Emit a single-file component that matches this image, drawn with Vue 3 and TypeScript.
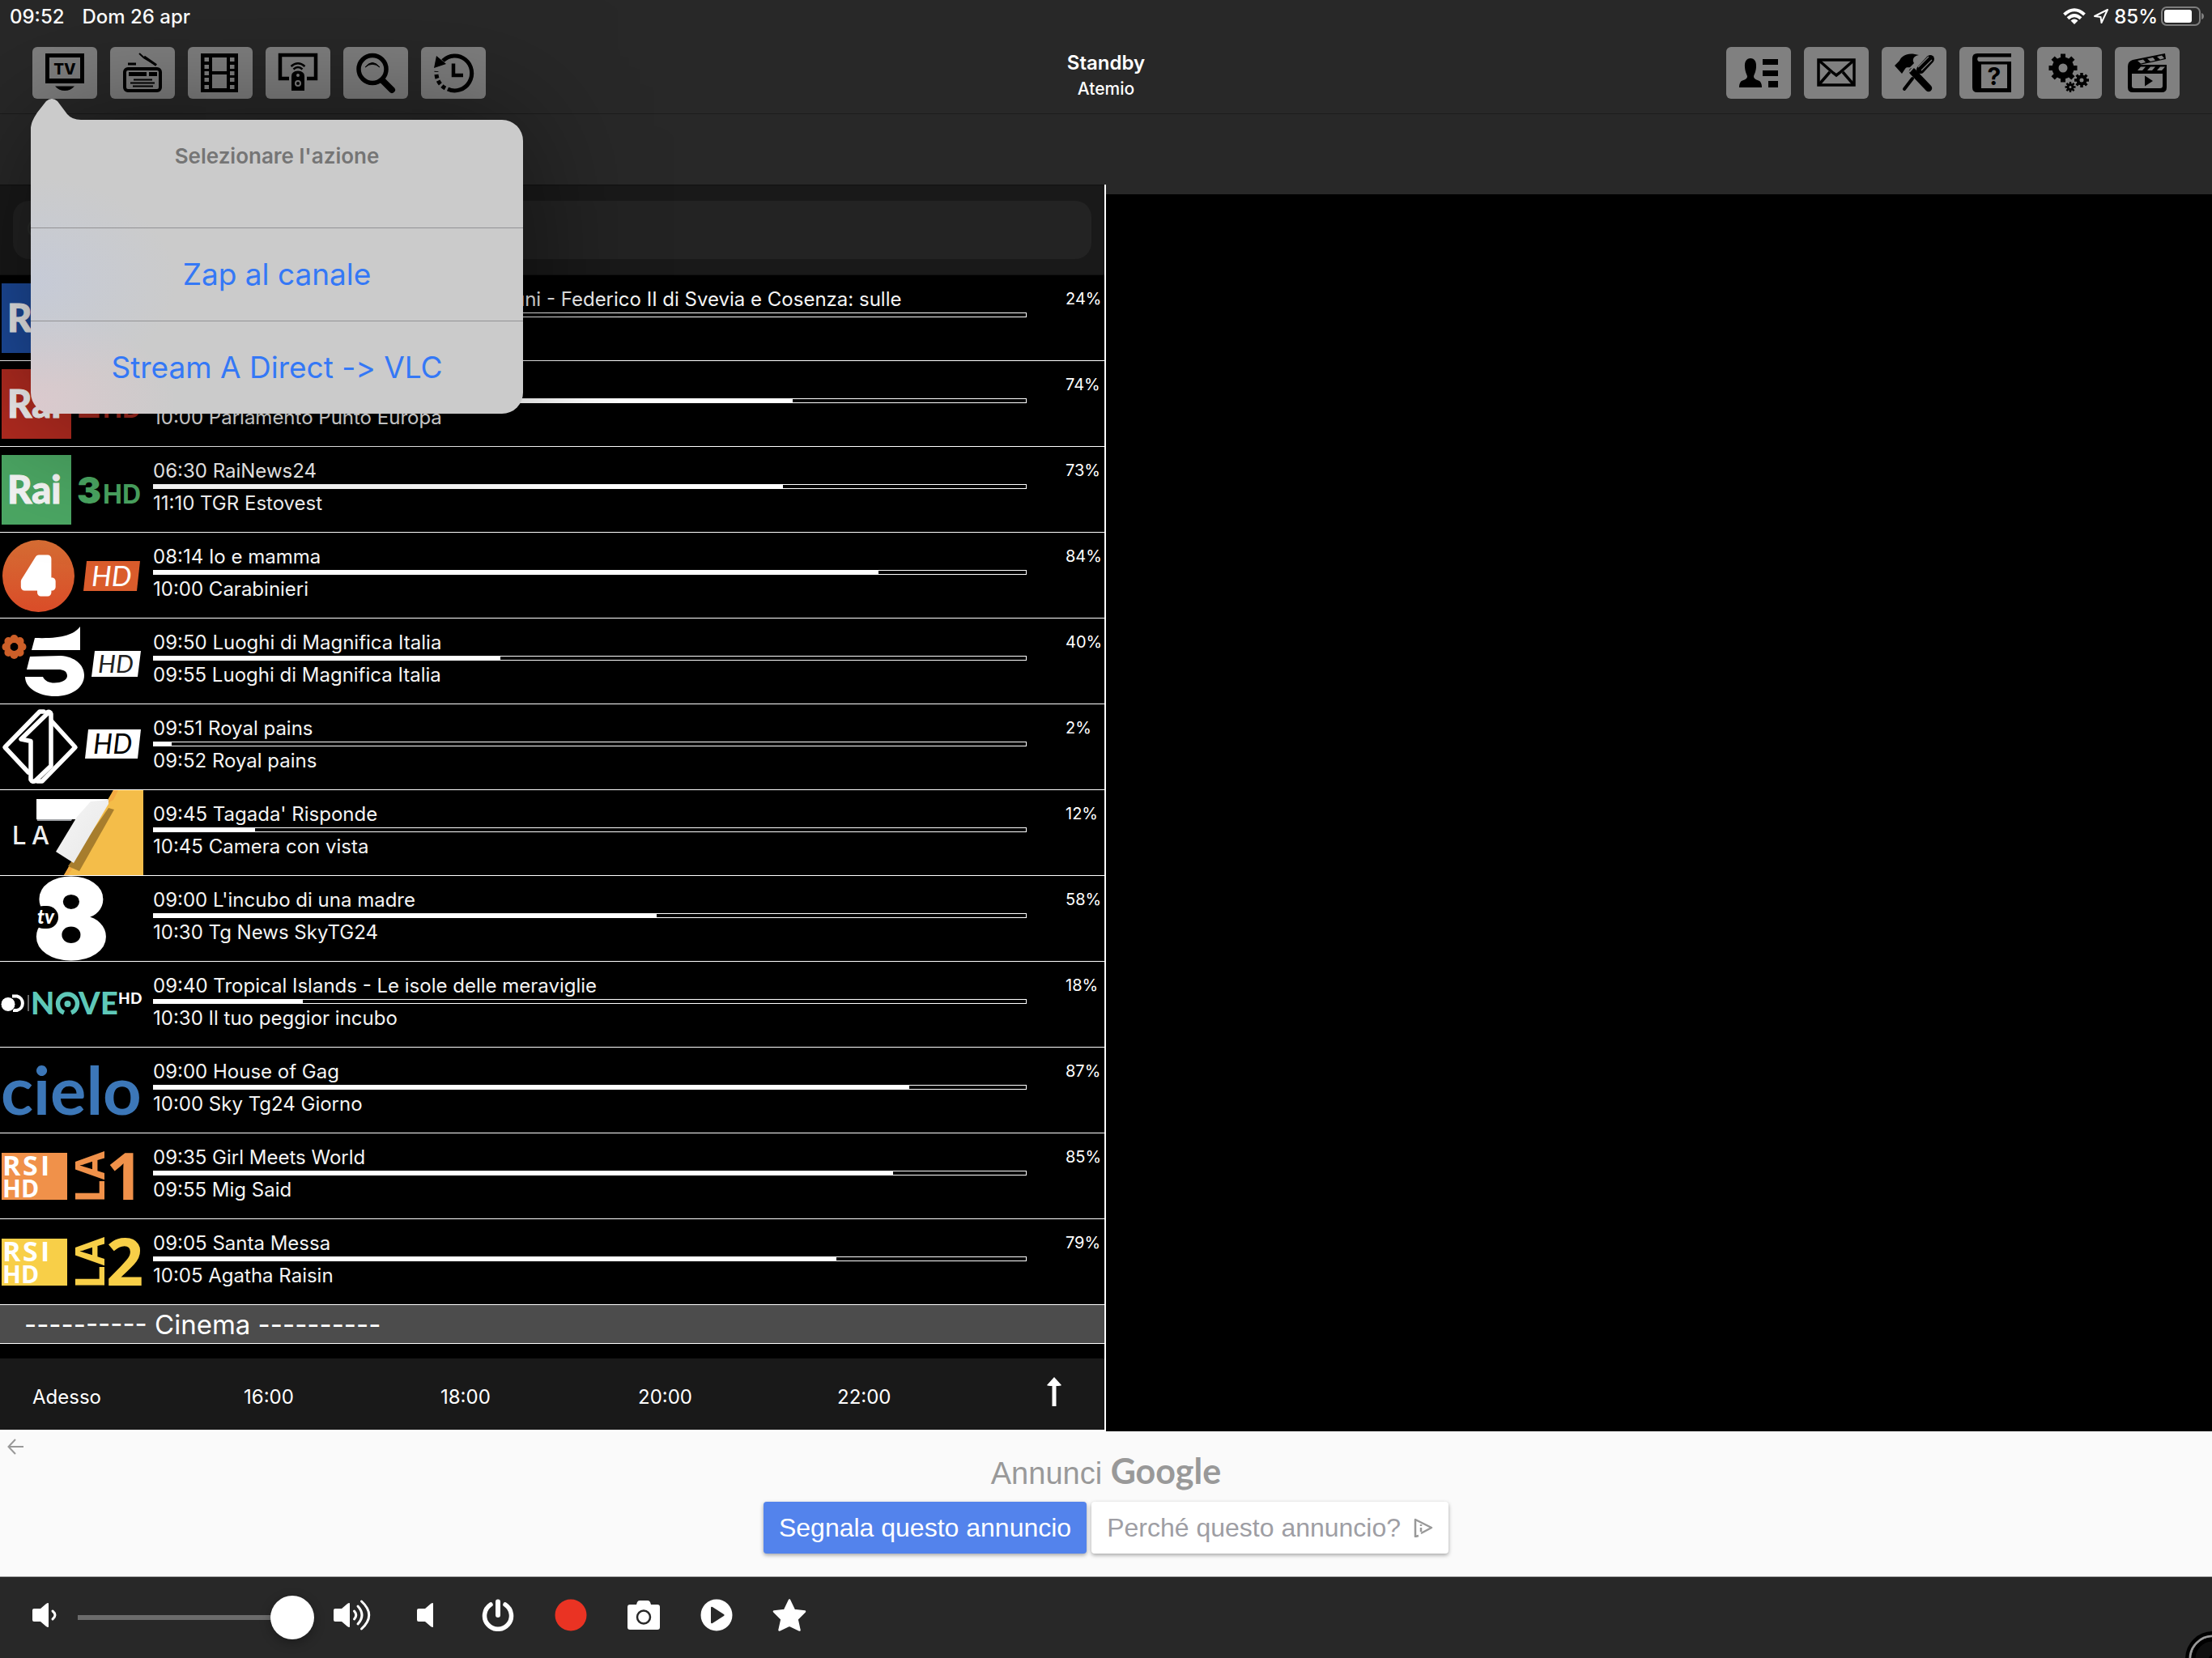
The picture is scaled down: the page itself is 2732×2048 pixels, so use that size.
<script setup lang="ts">
import { ref } from 'vue'

interface Channel {
  id: string
  now: string
  next: string
  fill: number
  percent: string
}

const channels: Channel[] = [
  { id: 'rai1', now: 'uni - Federico II di Svevia e Cosenza: sulle', next: '', fill: 24, percent: '24%' },
  { id: 'rai2', now: '', next: '10:00 Parlamento Punto Europa', fill: 73.3, percent: '74%' },
  { id: 'rai3', now: '06:30 RaiNews24', next: '11:10 TGR Estovest', fill: 72.1, percent: '73%' },
  { id: 'rete4', now: '08:14 Io e mamma', next: '10:00 Carabinieri', fill: 83.1, percent: '84%' },
  { id: 'canale5', now: '09:50 Luoghi di Magnifica Italia', next: '09:55 Luoghi di Magnifica Italia', fill: 39.7, percent: '40%' },
  { id: 'italia1', now: '09:51 Royal pains', next: '09:52 Royal pains', fill: 2, percent: '2%' },
  { id: 'la7', now: "09:45 Tagada' Risponde", next: '10:45 Camera con vista', fill: 11.6, percent: '12%' },
  { id: 'tv8', now: "09:00 L'incubo di una madre", next: '10:30 Tg News SkyTG24', fill: 57.7, percent: '58%' },
  { id: 'nove', now: '09:40 Tropical Islands - Le isole delle meraviglie', next: '10:30 Il tuo peggior incubo', fill: 17.1, percent: '18%' },
  { id: 'cielo', now: '09:00 House of Gag', next: '10:00 Sky Tg24 Giorno', fill: 86.6, percent: '87%' },
  { id: 'la1', now: '09:35 Girl Meets World', next: '09:55 Mig Said', fill: 84.8, percent: '85%' },
  { id: 'la2', now: '09:05 Santa Messa', next: '10:05 Agatha Raisin', fill: 78.3, percent: '79%' },
]

const raiColors: Record<string, { box: string; digit: string; n: string }> = {
  rai1: { box: '#1d4c9f', digit: '#1d4c9f', n: '1' },
  rai2: { box: '#b32b20', digit: '#a62a20', n: '2' },
  rai3: { box: '#4ba663', digit: '#4aa561', n: '3' },
}
const rsi: Record<string, { color: string; n: string }> = {
  la1: { color: '#f0914a', n: '1' },
  la2: { color: '#f8cf48', n: '2' },
}

const times = ['Adesso', '16:00', '18:00', '20:00', '22:00']
const petals = [0, 45, 90, 135, 180, 225, 270, 315]
const teeth8 = [0, 45, 90, 135]
const holes = [13, 22, 30, 38, 47]
const volume = ref(100)
const search = ref('')
</script>

<template>
  <div class="app">
    <header class="top">
      <div class="status">
        <span>09:52</span>
        <span class="date">Dom 26 apr</span>
        <div class="status-right">
          <svg class="wifi" viewBox="0 0 28 20" aria-hidden="true">
            <g fill="none" stroke="#fff" stroke-width="4">
              <path d="M1.500 8Q14 -3.500 26.500 8" />
              <path d="M6 12.800Q14 5.500 22 12.800" />
            </g>
            <path d="M9.500 15.500Q14 11.500 18.500 15.500L14 20Z" fill="#fff" />
          </svg>
          <svg class="loc" viewBox="0 0 20 20" aria-hidden="true">
            <path d="M18 2L2 10L9.500 11L10.500 18Z" fill="none" stroke="#fff" stroke-width="2" stroke-linejoin="round" />
          </svg>
          <span>85%</span>
          <svg class="battery" viewBox="0 0 54 24" aria-hidden="true">
            <rect x="1" y="1" width="47" height="22" rx="6" fill="none" stroke="#7e7e7e" stroke-width="2" />
            <rect x="4" y="4" width="34" height="16" rx="3" fill="#fff" />
            <path d="M50 8Q53 9 53 12T50 16Z" fill="#7e7e7e" />
          </svg>
        </div>
      </div>

      <nav class="toolbar">
        <div class="tools">
          <button type="button" class="tool" aria-label="TV">
            <svg viewBox="0 0 80 64">
              <rect x="18.500" y="10.500" width="43" height="31" fill="none" stroke="#000" stroke-width="5" />
              <rect x="16" y="40" width="48" height="5" />
              <text x="40" y="34" text-anchor="middle" class="g-tv">TV</text>
              <path d="M28 48.500H52Q47 54 40 54T28 48.500Z" />
            </svg>
          </button>
          <button type="button" class="tool" aria-label="Radio">
            <svg viewBox="0 0 80 64">
              <path d="M36 8L42 13.500M41 13L57 22.500" stroke="#000" stroke-width="2" />
              <path d="M42 12L57 22.500" stroke="#000" stroke-width="3" />
              <rect x="22" y="19.500" width="10" height="3" />
              <rect x="18" y="27" width="44" height="27" rx="4" fill="none" stroke="#000" stroke-width="4" />
              <rect x="23" y="31" width="22" height="5" /><rect x="48" y="31" width="10" height="5" />
              <path d="M29 40.500H52M25 44.500H55M30 40.500H52M28 48.500H53" stroke="#000" stroke-width="2" />
            </svg>
          </button>
          <button type="button" class="tool" aria-label="Film">
            <svg viewBox="0 0 80 64">
              <rect x="16" y="8" width="46" height="48" />
              <g class="cut">
                <rect x="30" y="13" width="18" height="17" /><rect x="30" y="34" width="18" height="17" />
                <template v-for="y in holes" :key="y">
                  <rect x="20.500" :y="y" width="5.500" height="5" /><rect x="52" :y="y" width="5.500" height="5" />
                </template>
              </g>
            </svg>
          </button>
          <button type="button" class="tool" aria-label="Telecomando">
            <svg viewBox="0 0 80 64">
              <path d="M29 39H18V10H62V39H51" fill="none" stroke="#000" stroke-width="4.500" />
              <path d="M31.500 24Q40 16.500 48.500 24M34.500 27.500Q40 22.500 45.500 27.500" fill="none" stroke="#000" stroke-width="2.500" />
              <path d="M32 54V36Q32 30 40 29.500Q48 30 48 36V54Z" />
              <circle cx="40" cy="35" r="2" class="cut" />
              <circle cx="40" cy="45" r="3" fill="none" class="cut-line" stroke-width="2" />
            </svg>
          </button>
          <button type="button" class="tool" aria-label="Cerca">
            <svg viewBox="0 0 80 64">
              <path d="M49 42L60 53" stroke="#000" stroke-width="8" stroke-linecap="round" />
              <circle cx="36" cy="27.500" r="17" fill="none" stroke="#000" stroke-width="5.500" />
              <path d="M27 25Q36 14 45 25Q36 17.500 27 25Z" stroke="#000" stroke-width="1" />
            </svg>
          </button>
          <button type="button" class="tool" aria-label="Cronologia">
            <svg viewBox="0 0 80 64">
              <path d="M27 17A21 21.500 0 1 1 33 52" fill="none" stroke="#000" stroke-width="5" />
              <path d="M30 51A21 21.500 0 0 1 19 30" fill="none" stroke="#000" stroke-width="5" stroke-dasharray="5 3" />
              <path d="M19 11L16 26L31 21Z" />
              <path d="M40 20.500V35H52" fill="none" stroke="#000" stroke-width="4.500" />
            </svg>
          </button>
        </div>

        <div class="title">
          <h1>Standby</h1>
          <p>Atemio</p>
        </div>

        <div class="tools">
          <button type="button" class="tool" aria-label="Profili">
            <svg viewBox="0 0 80 64">
              <path d="M30 14C35 14 37.500 18 37 25C36.500 31 35 33 34 36C34 39 36 40 40 41.500Q44 43 44 50H16Q16 43 20 41.500C24 40 26 39 26 36C25 33 23.500 31 23 25C22.500 18 25 14 30 14Z" />
              <rect x="45" y="15" width="19" height="7" /><rect x="45" y="29" width="19" height="7" /><rect x="52" y="42" width="12" height="8" />
            </svg>
          </button>
          <button type="button" class="tool" aria-label="Messaggi">
            <svg viewBox="0 0 80 64">
              <g fill="none" stroke="#000" stroke-width="3.500">
                <rect x="18" y="16" width="44" height="31" />
                <path d="M19 17L36 32L40 35L44 32L61 17M19 46L32 31M61 46L48 31" />
              </g>
            </svg>
          </button>
          <button type="button" class="tool" aria-label="Strumenti">
            <svg viewBox="0 0 80 64">
              <path d="M16 23L22 17C25 10 33 6 46 10C40 11 37 15 40 20L35 25C33 26 31 24 29 27L25 33Z" />
              <path d="M38 30L58 51" stroke="#000" stroke-width="8.500" stroke-linecap="round" />
              <path d="M34 31L42 22" class="cut-line" stroke-width="2" />
              <path d="M28 52L38 39" stroke="#000" stroke-width="4" stroke-linecap="round" />
              <path d="M48 28L60 15" stroke="#000" stroke-width="10" stroke-linecap="round" />
              <path d="M45 25L58 12M49 29L62 16" class="cut-line" stroke-width="1.200" />
            </svg>
          </button>
          <button type="button" class="tool" aria-label="Guida">
            <svg viewBox="0 0 80 64">
              <path d="M64 8H22Q16 8 16 14V50Q16 56 22 56H64V18H24Q21 16 23 12.500H64Z" />
              <path d="M27 21.500H59V51H27Z" class="cut" />
              <text x="43" y="47" text-anchor="middle" class="g-q">?</text>
            </svg>
          </button>
          <button type="button" class="tool" aria-label="Impostazioni">
            <svg viewBox="0 0 80 64">
              <g stroke="#000">
                <circle cx="32" cy="26" r="9.500" fill="none" stroke-width="8" />
                <path v-for="a in teeth8" :key="'a' + a" d="M32 8.500V15M32 37V43.500" stroke-width="6" :transform="`rotate(${a} 32 26)`" />
                <circle cx="55" cy="41" r="4.500" fill="none" stroke-width="4" />
                <path v-for="a in teeth8" :key="'b' + a" d="M55 32V36M55 46V50" stroke-width="3.500" :transform="`rotate(${a} 55 41)`" />
                <circle cx="41" cy="49.500" r="3" fill="none" stroke-width="3" />
                <path v-for="a in teeth8" :key="'c' + a" d="M41 43V46M41 53V56" stroke-width="2.500" :transform="`rotate(${a} 41 49.500)`" />
              </g>
            </svg>
          </button>
          <button type="button" class="tool" aria-label="Registrazioni">
            <svg viewBox="0 0 80 64">
              <path d="M16 24Q16 18 22 16L62 8L63 15L31 22H64V50Q64 56 58 56H22Q16 56 16 50Z" />
              <path d="M21 33H59V48Q59 51 56 51H24Q21 51 21 48Z" class="cut" />
              <path d="M28 17L35 15.500L38 19L32 20.500ZM40 14.500L47 13L50 16.500L44 18ZM52 12L58 10.500L61 14L56 15.500ZM32 24.500H38L34 29H28ZM44 24.500H50L46 29H40ZM56 24.500H62L58 29H52Z" class="cut" />
              <path d="M37 35.500L47 42L37 48.500Z" />
            </svg>
          </button>
        </div>
      </nav>
      <div class="subbar"></div>
    </header>

    <main class="main">
      <section class="guide">
        <div class="search">
          <label class="field">
            <svg viewBox="0 0 32 32" aria-hidden="true"><circle cx="14" cy="14" r="11" fill="none" stroke="#2c2e2c" stroke-width="2" /><path d="M22 22L30 30" stroke="#2c2e2c" stroke-width="2" /></svg>
            <input v-model="search" type="text" aria-label="Cerca canale" />
          </label>
        </div>

        <ul class="list">
          <li v-for="c in channels" :key="c.id" class="row">
            <svg class="logo" viewBox="0 0 178 105" aria-hidden="true">
              <template v-if="raiColors[c.id]">
                <rect x="2" y="10" width="86" height="86" :fill="raiColors[c.id].box" />
                <text x="9" y="70" class="lato" font-size="47" fill="#f4f4f4" stroke="#f4f4f4" stroke-width="1">Rai</text>
                <text x="95" y="70" class="inter9" font-size="45" :fill="raiColors[c.id].digit">{{ raiColors[c.id].n }}</text>
                <text x="127" y="70" class="inter8" font-size="32" :fill="raiColors[c.id].digit">HD</text>
              </template>
              <template v-else-if="c.id === 'rete4'">
                <linearGradient id="r4" x1="0" y1="0" x2="0" y2="1"><stop offset="0" stop-color="#d56d34" /><stop offset="1" stop-color="#da4c28" /></linearGradient>
                <circle cx="47.500" cy="53.500" r="44.500" fill="url(#r4)" />
                <text x="47" y="74" text-anchor="middle" class="inter8" font-size="58" fill="#fff" stroke="#fff" stroke-width="9" stroke-linejoin="round">4</text>
                <path d="M107 35H173L169 72H103Z" fill="#da5c2c" />
                <text x="113" y="66" class="hd" font-size="35" fill="#fff">HD</text>
              </template>
              <template v-else-if="c.id === 'canale5'">
                <g fill="#cd5f28">
                  <circle v-for="a in petals" :key="a" cx="17.500" cy="25" r="5" :transform="`rotate(${a} 17.500 35)`" />
                  <circle cx="17.500" cy="35" r="8" fill="none" stroke="#cd5f28" stroke-width="6" />
                </g>
                <path d="M43 24C75 25 90 21 99 10V39H39Z" fill="#fff" />
                <path d="M37 47L75 46C92 47 104 57 104 70C104 86 88 96 68 96C48 96 31 86 31 72H53C55 77 61 79.500 67 79.500C75 79.500 83 76 83 71C83 65 78 63 72 63H33Z" fill="#fff" />
                <path d="M117 40H174L170 72H113Z" fill="#fff" />
                <text x="121" y="67" class="hd" font-size="31" fill="#222">HD</text>
              </template>
              <template v-else-if="c.id === 'italia1'">
                <g fill="none" stroke="#fff" stroke-width="5.500" stroke-linejoin="round" stroke-linecap="round">
                  <path d="M54 9H49L6 53L35 84" />
                  <path d="M60 10L26 43L38 45.500V93Q40 97 44 94L63 76V12Q62 8 58 10" />
                  <path d="M64 21L93 53L52 95H46" />
                </g>
                <path d="M109 31H174L170 67H105Z" fill="#fff" />
                <text x="115" y="61" class="hd" font-size="34" fill="#000">HD</text>
              </template>
              <template v-else-if="c.id === 'la7'">
                <linearGradient id="l7" x1="0" y1="0" x2="1" y2="1"><stop offset="0" stop-color="#f5f5f5" /><stop offset=".7" stop-color="#ececec" /><stop offset="1" stop-color="#b9bcc2" /></linearGradient>
                <path d="M140 0H177V105H79Z" fill="#f4bd49" />
                <path d="M140 0H146L140 12L133 16ZM90 86L79 105H84L94 90Z" fill="#f3aa42" />
                <path d="M134 22L141 24L98 100L84 94Z" fill="#a77d2d" />
                <path d="M45 34L90 34L88 38H46Z" fill="#9c9ea2" />
                <path d="M45 11H134L128 16L95 36H45Z" fill="#fff" />
                <path d="M112 14L134 12V17L91 90L69 76L95 33Z" fill="url(#l7)" />
                <text x="15 39" y="67" class="inter5" font-size="31" fill="#eee">LA</text>
              </template>
              <template v-else-if="c.id === 'tv8'">
                <text x="88" y="102" text-anchor="middle" class="inter9" font-size="136" fill="#fff" stroke="#fff" stroke-width="3">8</text>
                <rect x="40" y="37" width="32" height="28" rx="14" fill="#000" />
                <text x="46" y="59" class="tv" font-size="24" fill="#fff">tv</text>
              </template>
              <template v-else-if="c.id === 'nove'">
                <path d="M15 42.500H21A9 9 0 0 1 21 60H16" fill="none" stroke="#fff" stroke-width="4" />
                <circle cx="10" cy="52.500" r="9" fill="#fff" stroke="#000" stroke-width="1" />
                <rect x="34" y="41" width="2" height="20" fill="#666" />
                <text x="38" y="65" class="lato" font-size="38" fill="#5ec8b8">N</text>
                <path d="M79 63A12 12 0 1 1 88 63" fill="none" stroke="#5ec8b8" stroke-width="5.500" />
                <circle cx="83.500" cy="52" r="4" fill="#5ec8b8" />
                <text x="97 124" y="65" class="lato" font-size="38" fill="#5ec8b8">VE</text>
                <text x="146 161" y="52" class="lato" font-size="19" fill="#fff">HD</text>
              </template>
              <template v-else-if="c.id === 'cielo'">
                <text x="1" y="83" class="lato7" font-size="83" fill="#3c77b8">cielo</text>
              </template>
              <template v-else>
                <rect x="2" y="24" width="81" height="58" :fill="rsi[c.id].color" />
                <text x="3 28 50" y="52" class="open" font-size="34" fill="#fff">RSI</text>
                <text x="3" y="79" class="open" font-size="30" fill="#fff">HD</text>
                <text transform="translate(129 86) rotate(-90)" class="open" font-size="51" :fill="rsi[c.id].color">LA</text>
                <text x="131" y="82" class="open" font-size="81" :fill="rsi[c.id].color">{{ rsi[c.id].n }}</text>
              </template>
            </svg>
            <div class="epg">
              <span class="line" :class="{ continued: c.id === 'rai1' }">{{ c.now }}</span>
              <div class="bar"><div class="fill" :style="{ width: c.fill + '%' }"></div></div>
              <span class="line">{{ c.next }}</span>
            </div>
            <span class="pct">{{ c.percent }}</span>
          </li>
        </ul>
        <h2 class="group">---------- Cinema ----------</h2>
        <div class="rest"></div>

        <nav class="times">
          <button v-for="t in times" :key="t" type="button">{{ t }}</button>
          <button type="button" aria-label="Su">
            <svg viewBox="0 0 20 36"><path d="M10 0L19 10Q18 11 12.500 11V36H7.500V11Q2 11 1 10Z" fill="#fff" /></svg>
          </button>
        </nav>
      </section>
      <section class="player"></section>
    </main>

    <aside class="ad">
      <button type="button" class="back" aria-label="Indietro">
        <svg viewBox="0 0 20 20"><path d="M20 10H2M10 1L1.500 10L10 19" fill="none" stroke="#999" stroke-width="2" /></svg>
      </button>
      <p class="brand">Annunci <span>Google</span></p>
      <div class="choices">
        <button type="button" class="report">Segnala questo annuncio</button>
        <button type="button" class="why">
          Perché questo annuncio?
          <svg viewBox="0 0 24 24" aria-hidden="true">
            <path d="M6 22L2 23V2L22 12L9 19" fill="none" stroke="#999" stroke-width="2.500" stroke-linejoin="round" />
            <path d="M9 8V10M9 12V17" stroke="#999" stroke-width="2.500" />
          </svg>
        </button>
      </div>
    </aside>

    <footer class="controls">
      <svg class="low" viewBox="0 0 30 30" aria-hidden="true">
        <path d="M0 9Q0 7 2 7H10L17 1Q20 -1 20 1V29Q20 31 17 29L10 23H2Q0 23 0 21Z" fill="#fff" />
        <path d="M25 10Q31 15 25 20" fill="none" stroke="#fff" stroke-width="3" stroke-linecap="round" />
      </svg>
      <input v-model="volume" class="slider" type="range" min="0" max="100" aria-label="Volume" />
      <button type="button" aria-label="Volume alto">
        <svg viewBox="0 0 46 40">
          <path d="M0 14Q0 12 2 12H10L17 6Q20 4 20 6V34Q20 36 17 34L10 28H2Q0 28 0 26Z" fill="#fff" />
          <g fill="none" stroke="#fff" stroke-width="3" stroke-linecap="round">
            <path d="M25.500 15Q30 20 25.500 25" /><path d="M30 9Q40 20 30 31" /><path d="M34.500 3Q53 20 34.500 37" />
          </g>
        </svg>
      </button>
      <button type="button" aria-label="Muto">
        <svg viewBox="0 0 20 40"><path d="M0 14Q0 12 2 12H10L17 6Q20 4 20 6V34Q20 36 17 34L10 28H2Q0 28 0 26Z" fill="#fff" /></svg>
      </button>
      <button type="button" aria-label="Spegni">
        <svg viewBox="0 0 40 40">
          <path d="M11 7A16.500 16.500 0 1 0 29 7" fill="none" stroke="#fff" stroke-width="5.500" stroke-linecap="round" />
          <path d="M20 3.500V20" stroke="#fff" stroke-width="6" stroke-linecap="round" />
        </svg>
      </button>
      <button type="button" aria-label="Registra">
        <svg viewBox="0 0 40 40"><circle cx="20" cy="20" r="19.500" fill="#ea3323" /></svg>
      </button>
      <button type="button" aria-label="Foto">
        <svg viewBox="0 0 40 40">
          <path d="M3 7H11L12 4Q13 2 15 2H25Q27 2 28 4L29 7H37Q40 7 40 10V35Q40 38 37 38H3Q0 38 0 35V10Q0 7 3 7Z" fill="#fff" />
          <circle cx="20" cy="22.500" r="8" fill="none" stroke="#282828" stroke-width="2.500" />
        </svg>
      </button>
      <button type="button" aria-label="Riproduci">
        <svg viewBox="0 0 40 40"><circle cx="20" cy="20" r="19.500" fill="#fff" /><path d="M13 11Q13 9 15 10L29 19Q30.500 20 29 21L15 30Q13 31 13 29Z" fill="#282828" /></svg>
      </button>
      <button type="button" aria-label="Preferiti">
        <svg viewBox="0 0 42 40"><path d="M21 1.500L27 14L40 15.500L30.500 25L33.500 38.500L21 32.500L8.500 38.500L11.500 25L2 15.500L15 14Z" fill="#fff" stroke="#fff" stroke-width="2.500" stroke-linejoin="round" /></svg>
      </button>
    </footer>

    <div class="popover" role="dialog" aria-labelledby="sheet-title">
      <svg class="arrow" viewBox="0 0 64 40" aria-hidden="true">
        <path d="M0 40C0 28 4 24 8 17L19 3Q26 -3 33 3L45 19Q51 26 62 26V40Z" fill="#cbcbcb" />
      </svg>
      <h2 id="sheet-title">Selezionare l'azione</h2>
      <button type="button">Zap al canale</button>
      <button type="button">Stream A Direct -&gt; VLC</button>
    </div>

    <svg class="orb" viewBox="0 0 34 34" aria-hidden="true">
      <circle cx="35" cy="35" r="34" fill="#000" />
      <circle cx="35" cy="35" r="28" fill="#111" stroke="#999" stroke-width="3" />
      <circle cx="35" cy="35" r="24" fill="#0f0f0f" stroke="#000" stroke-width="5" />
      <circle cx="35" cy="35" r="5" fill="#000" />
    </svg>
  </div>
</template>

<style>
body {
  background: #000;
}
</style>

<style scoped>
.app {
  position: relative;
  display: flex;
  flex-direction: column;
  min-height: 100vh;
  overflow: hidden;
  background: #000;
  color: #fff;
  font-family: Inter, 'Liberation Sans', sans-serif;
  font-size: 24px;
}
h1, h2, p, ul {
  margin: 0;
  padding: 0;
  font-weight: 400;
}
button {
  margin: 0;
  padding: 0;
  border: 0;
  background: none;
  color: inherit;
  font: inherit;
  cursor: pointer;
}
svg {
  display: block;
}
.top {
  background: #282828;
}
.status {
  display: flex;
  align-items: center;
  height: 40px;
  padding: 0 9px 0 12px;
  box-sizing: border-box;
  font-weight: 500;
}
.date {
  margin-left: 22px;
}
.status-right {
  display: flex;
  align-items: center;
  margin-left: auto;
}
.wifi {
  width: 28px;
  height: 20px;
  margin-right: 9px;
}
.loc {
  width: 20px;
  height: 20px;
  margin-right: 6px;
}
.battery {
  width: 54px;
  height: 24px;
  margin-left: 4px;
}
.toolbar {
  display: grid;
  grid-template-columns: 1fr auto 1fr;
  align-items: center;
  height: 100px;
  padding: 0 40px;
  border-bottom: 1px solid #1c1c1c;
}
.tools {
  display: flex;
  gap: 16px;
}
.tools:last-child {
  justify-content: flex-end;
}
.tool {
  width: 80px;
  height: 64px;
  border-radius: 6px;
  background: #808080;
}
.tool svg {
  width: 80px;
  height: 64px;
}
.cut {
  fill: #808080;
}
.cut-line {
  stroke: #808080;
}
.g-tv {
  font: 800 19px Inter, sans-serif;
}
.g-q {
  font: 700 30px Inter, sans-serif;
}
.title {
  padding-top: 8px;
  text-align: center;
}
.title h1 {
  font-size: 24px;
  line-height: 32px;
  font-weight: 600;
}
.title p {
  font-size: 21px;
  line-height: 32px;
  font-weight: 500;
}
.subbar {
  height: 87px;
}
.main {
  display: flex;
  flex: 1;
}
.guide {
  display: flex;
  flex-direction: column;
  flex: none;
  width: 50%;
  box-sizing: border-box;
  border-right: 2px solid #fff;
  border-bottom: 2px solid #fff;
}
.player {
  flex: 1;
  border-top: 12px solid #282828;
}
.search {
  height: 112px;
  box-sizing: border-box;
  padding: 19px 16px;
  border-top: 1px solid #101010;
  border-bottom: 1px solid #111;
  background: #191919;
}
.field {
  display: flex;
  align-items: center;
  gap: 12px;
  height: 72px;
  padding: 0 16px;
  border-radius: 20px;
  background: #232323;
}
.field svg {
  width: 32px;
  height: 32px;
}
.field input {
  flex: 1;
  border: 0;
  outline: 0;
  background: none;
  color: #fff;
  font: inherit;
}
.list {
  list-style: none;
}
.row {
  display: flex;
  height: 105px;
  border-bottom: 1px solid #fff;
}
.logo {
  flex: none;
  width: 178px;
  height: 105px;
  margin-right: 11px;
  overflow: visible;
}
.epg {
  flex: 1;
  min-width: 0;
  padding-top: 14px;
}
.line {
  display: block;
  height: 32px;
  line-height: 32px;
  white-space: pre;
  color: #f4f4f4;
}
.continued {
  margin-left: 445px;
}
.bar {
  height: 4px;
  margin-bottom: 2px;
  border: 1px solid #fff;
}
.fill {
  height: 4px;
  background: #fff;
}
.pct {
  width: 48px;
  margin-left: 48px;
  padding-top: 14px;
  font-size: 20px;
  line-height: 30px;
  white-space: nowrap;
}
.lato { font-family: Lato, sans-serif; font-weight: 900; }
.lato7 { font-family: Lato, sans-serif; font-weight: 700; }
.inter5 { font-family: Inter, sans-serif; font-weight: 500; }
.inter9 { font-family: Inter, sans-serif; font-weight: 900; }
.inter8 { font-family: Inter, sans-serif; font-weight: 700; }
.open { font-family: 'Open Sans', sans-serif; font-weight: 700; }
.hd { font-family: Lato, sans-serif; font-weight: 400; font-style: italic; }
.tv { font-family: Lato, sans-serif; font-weight: 900; font-style: italic; }
.group {
  height: 47px;
  padding-left: 30px;
  border-bottom: 1px solid #fff;
  background: #4c4c4c;
  font-size: 33px;
  line-height: 49px;
}
.rest {
  flex: 1;
}
.times {
  display: grid;
  grid-template-columns: 261fr 243fr 244fr 246fr 256fr 74fr;
  align-items: center;
  height: 88px;
  padding-left: 40px;
  background: #191919;
}
.times button {
  padding-top: 7px;
  text-align: left;
}
.times button:last-child {
  padding-top: 0;
}
.times svg {
  width: 20px;
  height: 36px;
  margin: -6px 0 0 2px;
}
.ad {
  position: relative;
  height: 179px;
  border-bottom: 1px solid #a8a8a8;
  background: #fafafa;
  color: #999;
  font-family: 'Liberation Sans', Arial, sans-serif;
  text-align: center;
}
.back {
  position: absolute;
  left: 9px;
  top: 9px;
}
.back svg {
  width: 20px;
  height: 20px;
}
.brand {
  height: 68px;
  padding-top: 19px;
  font-size: 38px;
  line-height: 60px;
}
.brand span {
  font-family: Lato, sans-serif;
  font-size: 43px;
  font-weight: 700;
}
.choices {
  display: flex;
  justify-content: center;
  gap: 6px;
}
.choices button {
  display: flex;
  align-items: center;
  height: 64px;
  padding: 0 19px;
  border-radius: 4px;
  box-shadow: 0 2px 5px rgba(0, 0, 0, 0.35);
  font-size: 32px;
}
.choices .report {
  background: #5383ec;
  color: #fff;
}
.choices .why {
  background: #fff;
  color: #9e9ea4;
}
.why svg {
  width: 24px;
  height: 24px;
  margin-left: 16px;
}
.controls {
  display: flex;
  align-items: center;
  height: 100px;
  box-sizing: border-box;
  padding: 0 0 6px 40px;
  background: #282828;
}
.low {
  width: 30px;
  height: 30px;
}
.slider {
  -webkit-appearance: none;
  appearance: none;
  width: 292px;
  height: 54px;
  margin: 6px 2px 0 26px;
  background: linear-gradient(#6b6b6b, #6b6b6b) 0 24px / 260px 6px no-repeat;
}
.slider::-webkit-slider-thumb {
  -webkit-appearance: none;
  width: 54px;
  height: 54px;
  border-radius: 50%;
  background: #fff;
  box-shadow: 0 4px 14px rgba(0, 0, 0, 0.3);
}
.controls button {
  display: flex;
  justify-content: center;
  width: 90px;
}
.controls button svg {
  height: 40px;
}
.popover {
  position: absolute;
  left: 38px;
  top: 148px;
  width: 608px;
  border-radius: 12px 26px 26px 26px;
  background:
    radial-gradient(ellipse 180px 130px at 0 200px, rgba(190, 202, 232, 0.4), rgba(190, 202, 232, 0)),
    radial-gradient(ellipse 180px 110px at 0 350px, rgba(235, 200, 208, 0.5), rgba(235, 200, 208, 0)),
    #cbcbcb;
  box-shadow: 0 0 160px rgba(0, 0, 0, 0.5);
  color: #3478f6;
  text-align: center;
}
.arrow {
  position: absolute;
  left: 0;
  top: -26px;
  width: 64px;
  height: 40px;
}
.popover h2 {
  height: 104px;
  padding-top: 29px;
  color: #757575;
  font-size: 26px;
  font-weight: 600;
  line-height: 32px;
}
.popover button {
  display: block;
  width: 100%;
  height: 115px;
  border-top: 1px solid #939395;
  font-size: 37px;
  line-height: 114px;
  font-feature-settings: 'calt' 0;
}
.orb {
  position: absolute;
  right: 0;
  bottom: 0;
  width: 34px;
  height: 34px;
}
</style>
